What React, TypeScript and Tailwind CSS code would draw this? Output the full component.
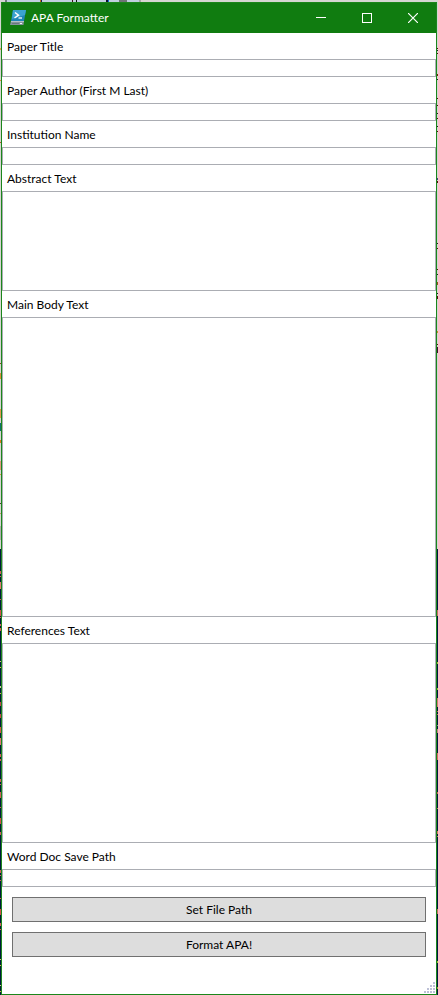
import React, { useId } from "react";

type Fleck = [start: number, length: number, color: string];

const leftFlecks: Fleck[] = [
  [48, 2, "#e0a050"], [80, 1, "#d9903c"], [142, 1, "#b0562a"],
  [363, 1, "#8a4a1c"], [373, 6, "#d9903c"], [409, 9, "#e09a50"], [423, 8, "#107070"],
  [440, 3, "#d97820"], [461, 9, "#e09a80"], [474, 1, "#d9a040"], [503, 1, "#50402c"],
  [513, 1, "#c09a60"], [526, 14, "#b0b0b0"], [549, 446, "#001a3c"],
  [571, 3, "#d06058"], [576, 1, "#d06058"], [582, 7, "#e07a72"], [599, 1, "#d06058"],
  [610, 6, "#d05048"], [617, 1, "#d06058"], [624, 2, "#d06058"], [628, 3, "#d06058"],
  [661, 1, "#d0d080"], [667, 1, "#d0d040"], [686, 2, "#d0d0a0"], [693, 1, "#d0c040"],
  [702, 4, "#c04848"], [714, 4, "#c04848"], [727, 6, "#d05a48"], [738, 7, "#e07a72"],
  [754, 3, "#d06058"], [759, 2, "#d06058"], [779, 3, "#d06058"], [784, 1, "#d06058"],
  [792, 6, "#d06058"], [807, 1, "#d06058"], [818, 6, "#d05048"], [832, 3, "#d06058"],
  [870, 3, "#d06058"], [875, 1, "#d06058"], [880, 1, "#d06058"], [898, 1, "#d06058"],
  [909, 6, "#d05048"], [923, 3, "#d06058"], [929, 1, "#d06058"], [959, 1, "#d0d080"],
  [965, 1, "#d0c040"], [985, 1, "#d0d080"], [991, 1, "#d0c040"],
];

const rightFlecks: Fleck[] = [
  [48, 1, "#501010"], [50, 1, "#202020"], [53, 1, "#501010"], [74, 2, "#702010"],
  [79, 1, "#202020"], [98, 1, "#501010"], [105, 1, "#501010"], [113, 1, "#202020"],
  [118, 1, "#501010"], [126, 1, "#202020"], [131, 1, "#501010"], [178, 2, "#404080"],
  [181, 2, "#501010"], [243, 1, "#202020"], [248, 1, "#501010"], [269, 1, "#501010"],
  [274, 1, "#202020"], [282, 3, "#905020"], [293, 1, "#202020"], [296, 3, "#501010"],
  [331, 2, "#c09030"], [344, 1, "#501010"], [347, 6, "#401030"],
  [549, 446, "#001a3c"], [610, 6, "#c07060"], [662, 2, "#a0c040"], [688, 2, "#a0c040"],
  [698, 9, "#d07a70"], [711, 1, "#c07060"], [714, 1, "#c07060"], [725, 1, "#80a080"],
  [729, 4, "#c08080"], [753, 7, "#d06a60"], [792, 2, "#c06058"], [808, 1, "#c08060"],
  [831, 3, "#d07a60"], [836, 1, "#c08060"], [909, 5, "#c07060"], [961, 2, "#a0c040"],
  [987, 2, "#a0a040"],
];

const topFlecks: Fleck[] = [
  [0, 5, "#d6d6d6"], [5, 2, "#707880"], [7, 134, "#c0cfdf"], [40, 1, "#c06a20"],
  [41, 1, "#102050"], [72, 1, "#401010"], [76, 1, "#101010"], [106, 2, "#101030"],
  [108, 1, "#1070d0"], [119, 8, "#707478"], [139, 2, "#a8a8a8"],
];

/** A thin slice of whatever lies behind the window. */
function BackdropEdge({ flecks, horizontal = false }: { flecks: Fleck[]; horizontal?: boolean }) {
  const image = [...flecks]
    .reverse()
    .map(([, , color]) => `linear-gradient(${color}, ${color})`)
    .join(",");
  const ordered = [...flecks].reverse();
  return (
    <div
      aria-hidden="true"
      className={`shrink-0 bg-[#d6d6d2] bg-no-repeat ${horizontal ? "h-[2px]" : "w-px"}`}
      style={{
        backgroundImage: image,
        backgroundPosition: ordered
          .map(([start]) => (horizontal ? `${start}px 0` : `0 ${start - 2}px`))
          .join(","),
        backgroundSize: ordered
          .map(([, length]) => (horizontal ? `${length}px 100%` : `100% ${length}px`))
          .join(","),
      }}
    />
  );
}

function PowerShellIcon() {
  return (
    <svg width="16" height="16" viewBox="0 0 16 16" aria-hidden="true">
      <path d="M3 0H16L14 11H1Z" fill="#1f86b8" />
      <path d="M3 0H16L15 5L2 9Z" fill="#3ba3d0" />
      <path d="M1 11H14L13.500 15H0Z" fill="#84949c" />
      <path d="M1 11.500H14" stroke="#b4c0c6" />
      <path d="M2 13.500H9" stroke="#6a7880" />
      <path d="M10 13.500H12" stroke="#eef2f4" />
      <path d="M5 2.500L8.500 5.200L4.500 8" fill="none" stroke="#fff" strokeWidth="1.500" />
      <path d="M8.500 8H12" stroke="#fff" strokeWidth="1.300" />
    </svg>
  );
}

function TitleBar() {
  const button = "flex h-full w-[46px] items-center justify-center text-white";
  return (
    <header className="flex h-[30px] items-center bg-[#107c10] pl-2 text-white">
      <PowerShellIcon />
      <h1 className="grow pl-[5px] leading-4">APA Formatter</h1>
      <button type="button" aria-label="Minimize" className={button}>
        <svg width="10" height="10" viewBox="0 0 10 10" shapeRendering="crispEdges">
          <path d="M0 4.500H10" stroke="currentColor" />
        </svg>
      </button>
      <button type="button" aria-label="Maximize" className={button}>
        <svg width="10" height="10" viewBox="0 0 10 10" shapeRendering="crispEdges">
          <rect x="0.500" y="0.500" width="9" height="9" fill="none" stroke="currentColor" />
        </svg>
      </button>
      <button type="button" aria-label="Close" className={button}>
        <svg width="10" height="10" viewBox="0 0 10 10">
          <path d="M0 0L10 10M10 0L0 10" stroke="currentColor" strokeWidth="1.200" />
        </svg>
      </button>
    </header>
  );
}

function Field({ label, area }: { label: string; area?: string }) {
  const id = useId();
  const box = "block w-full resize-none border border-[#abadb3] bg-white px-1 outline-none";
  return (
    <div>
      <label htmlFor={id} className="block px-[5px] pt-[6px] pb-1 leading-4">
        {label}
      </label>
      {area ? (
        <textarea id={id} className={`${box} ${area}`} />
      ) : (
        <input id={id} type="text" className={`${box} h-[18px]`} />
      )}
    </div>
  );
}

function ActionButton({ children }: { children: React.ReactNode }) {
  return (
    <button type="button" className="h-[25px] border border-[#707070] bg-[#dddddd] leading-4">
      {children}
    </button>
  );
}

function ResizeGrip() {
  const dots = [[9, 0], [6, 3], [9, 3], [3, 6], [6, 6], [9, 6], [0, 9], [3, 9], [6, 9], [9, 9]];
  return (
    <svg width="11" height="11" viewBox="0 0 11 11" shapeRendering="crispEdges" aria-hidden="true">
      {dots.map(([x, y]) => (
        <rect key={`${x}-${y}`} x={x} y={y} width="2" height="2" fill="#bcc0d6" />
      ))}
    </svg>
  );
}

export default function App() {
  return (
    <div className="flex min-h-screen flex-col">
      <BackdropEdge flecks={topFlecks} horizontal />
      <div className="flex grow">
        <BackdropEdge flecks={leftFlecks} />
        <main className="flex min-w-0 grow flex-col border border-[#1b861b] bg-white font-[Lato,'Open_Sans',sans-serif] text-[12px] text-black">
          <TitleBar />
          <form>
            <Field label="Paper Title" />
            <Field label="Paper Author (First M Last)" />
            <Field label="Institution Name" />
            <Field label="Abstract Text" area="h-[100px]" />
            <Field label="Main Body Text" area="h-[300px]" />
            <Field label="References Text" area="h-[200px]" />
            <Field label="Word Doc Save Path" />
            <div className="flex flex-col gap-[10px] p-[10px]">
              <ActionButton>Set File Path</ActionButton>
              <ActionButton>Format APA!</ActionButton>
            </div>
          </form>
          <footer className="mt-auto flex justify-end pr-px pb-px">
            <ResizeGrip />
          </footer>
        </main>
        <BackdropEdge flecks={rightFlecks} />
      </div>
    </div>
  );
}
